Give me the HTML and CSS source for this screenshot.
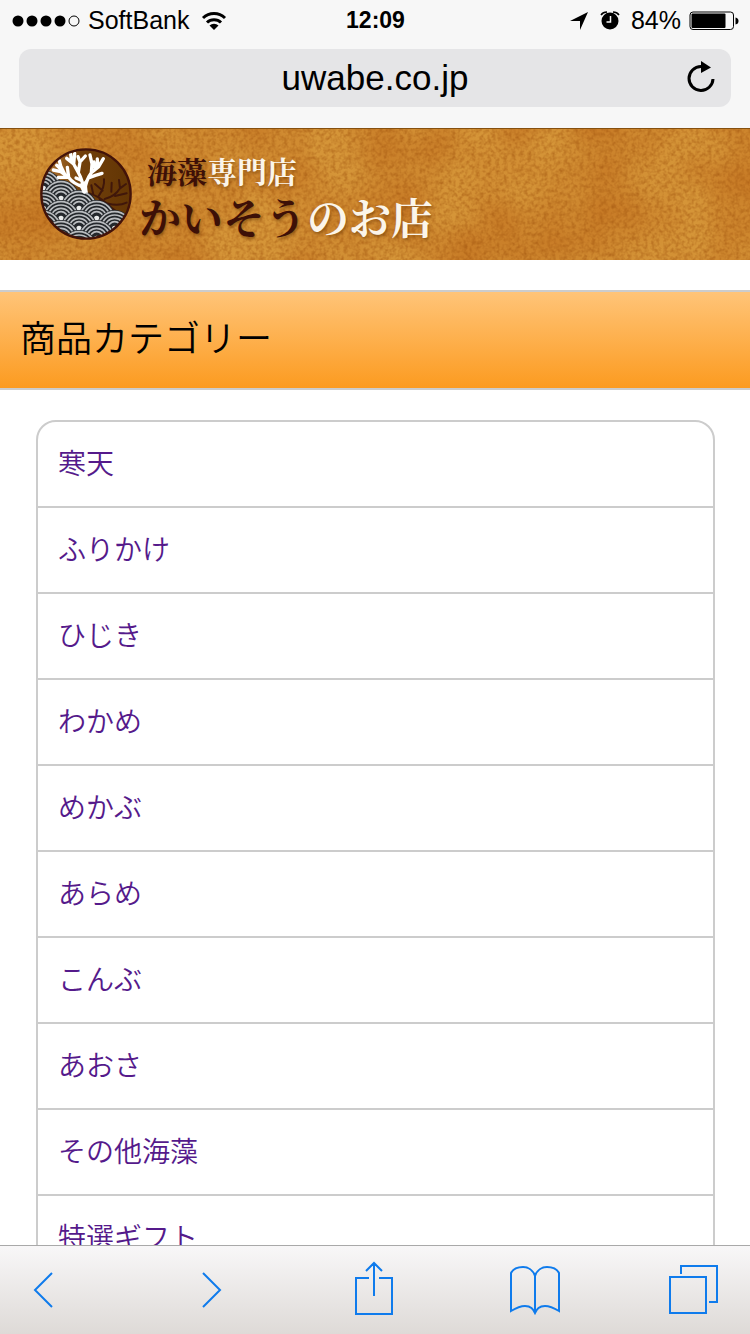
FILE: index.html
```html
<!DOCTYPE html>
<html lang="ja">

<head>
  <meta charset="utf-8">
  <meta name="viewport" content="width=device-width, initial-scale=1">
  <title>かいそうのお店</title>
  <link rel="stylesheet" href="styles.css">
</head>

<body>
  <header class="browser">
    <div class="status">
      <div class="status-left">
        <svg class="signal" width="68" height="12" viewBox="0 0 68 12">
          <circle cx="6" cy="6" r="5.5" />
          <circle cx="20" cy="6" r="5.5" />
          <circle cx="34" cy="6" r="5.5" />
          <circle cx="48" cy="6" r="5.5" />
          <circle cx="62" cy="6" r="5" fill="none" stroke="#000" />
        </svg>
        <span>SoftBank</span>
        <svg class="wifi" width="26" height="20" viewBox="0 0 26 20">
          <path d="M2 7a16 16 0 0 1 22 0M6 11.500a10 10 0 0 1 14 0" fill="none" stroke="#000" stroke-width="3" />
          <path d="M8.500 14.500a6.500 6.500 0 0 1 9 0L13 19z" />
        </svg>
      </div>
      <time class="clock">12:09</time>
      <div class="status-right">
        <svg width="20" height="20" viewBox="0 0 20 20">
          <path d="M19 1L11 19V10H1z" />
        </svg>
        <svg class="alarm" width="20" height="20" viewBox="0 0 20 20">
          <circle cx="10" cy="10" r="8.500" />
          <path d="M1 4Q3 1 7 1M13 1q4 0 6 3" fill="none" stroke="#000" stroke-width="1.500" />
          <path d="M10.500 5V11H6.500" fill="none" stroke="#f7f7f7" stroke-width="1.500" />
        </svg>
        <span>84%</span>
        <svg class="battery" width="50" height="20" viewBox="0 0 50 20">
          <rect x="1" y="1" width="43.500" height="17.500" rx="3" fill="none" stroke="#000" />
          <rect x="2.500" y="2.500" width="34" height="14.500" rx="1" />
          <path d="M46.500 6.500q3 .5 3 3.500t-3 3.500z" />
        </svg>
      </div>
    </div>
    <form class="address">
      <input class="url" type="text" value="uwabe.co.jp" aria-label="URL">
      <button class="reload" type="button" aria-label="再読み込み">
        <svg width="28" height="34" viewBox="0 0 28 34">
          <path d="M14 5.500a12 12 0 1 0 12 12.500" fill="none" stroke="#000" stroke-width="3" />
          <path d="M14 0l10 6.500L14 12z" />
        </svg>
      </button>
    </form>
  </header>

  <main class="page">
    <div class="banner">
      <svg class="texture" width="100%" height="100%">
        <filter id="grain" x="0" y="0" width="100%" height="100%" color-interpolation-filters="sRGB">
          <feTurbulence type="fractalNoise" baseFrequency="0.25" numOctaves="2" seed="4" />
          <feColorMatrix values="0 0 0 0 .64  0 0 0 0 .34  0 0 0 0 .06  1.200 0 0 0 -.45" />
        </filter>
        <filter id="blotch" x="0" y="0" width="100%" height="100%" color-interpolation-filters="sRGB">
          <feTurbulence type="fractalNoise" baseFrequency="0.014" numOctaves="2" seed="9" />
          <feColorMatrix values="0 0 0 0 .76  0 0 0 0 .44  0 0 0 0 .12  1.600 0 0 0 -.5" />
        </filter>
        <rect width="100%" height="100%" filter="url(#blotch)" />
        <rect width="100%" height="100%" filter="url(#grain)" />
      </svg>
      <a class="logo" href="#">
        <svg class="logo-mark" width="92" height="92" viewBox="30 24 276 276">
          <defs>
            <clipPath id="disc">
              <circle cx="168" cy="162" r="134" />
            </clipPath>
            <linearGradient id="sky">
              <stop offset="0" stop-color="#b87a34" />
              <stop offset=".45" stop-color="#713f0b" />
              <stop offset="1" stop-color="#623504" />
            </linearGradient>
            <g id="wave">
              <circle r="55" fill="#24282c" />
              <g fill="none" stroke="#b9bcbf" stroke-width="5">
                <circle r="50" />
                <circle r="40" />
                <circle r="30" />
                <circle r="20" />
              </g>
              <circle r="8" fill="#e8eaea" />
            </g>
          </defs>
          <circle cx="168" cy="162" r="135" fill="url(#sky)" />
          <g clip-path="url(#disc)">
            <g fill="none" stroke="#40170a" stroke-width="6" stroke-linecap="round">
              <path d="M178 160Q210 170 232 192T275 222M205 170Q225 140 222 118M218 152L195 132M224 177Q255 170 270 145L267 120M255 168L290 160M232 190Q265 200 290 188M190 164L184 136M244 155L245 128M208 174L222 210M270 145L288 132" />
            </g>
            <use href="#wave" x="40" y="145" />
            <use href="#wave" x="93" y="175" />
            <use href="#wave" x="40" y="205" />
            <use href="#wave" x="147" y="205" />
            <use href="#wave" x="93" y="235" />
            <use href="#wave" x="200" y="235" />
            <use href="#wave" x="40" y="265" />
            <use href="#wave" x="147" y="265" />
            <use href="#wave" x="254" y="265" />
            <use href="#wave" x="93" y="295" />
            <use href="#wave" x="200" y="295" />
            <use href="#wave" x="147" y="325" />
            <g fill="none" stroke="#fff" stroke-width="10" stroke-linecap="round" stroke-linejoin="round">
              <path d="M163 156Q158 120 144 96L131 72 110 55M131 72L134 40M125 67L122 42M145 97L150 66 166 48M150 66L144 50" />
              <path d="M160 140Q130 132 116 112L92 95 70 90M116 112L85 112M104 103L92 78 88 62M98 92L80 76M116 112L112 82" />
              <path d="M164 150Q168 120 184 98L186 72 180 45M184 98L206 80 220 56M196 88L192 66M203 82L202 57M175 114L196 106 216 100M152 120L138 114" />
            </g>
            <path d="M146 132Q162 130 172 114Q170 145 174 158H158Z" fill="#fff" />
          </g>
          <circle cx="168" cy="162" r="134" fill="none" stroke="#431309" stroke-width="7" />
        </svg>
        <span class="logo-text">
          <span class="logo-sub">海藻<span class="light">専門店</span></span>
          <span class="logo-name">かいそう<span class="light">のお店</span></span>
        </span>
      </a>
    </div>

    <h1 class="title">商品カテゴリー</h1>

    <ul class="categories">
      <li><a href="#">寒天</a></li>
      <li><a href="#">ふりかけ</a></li>
      <li><a href="#">ひじき</a></li>
      <li><a href="#">わかめ</a></li>
      <li><a href="#">めかぶ</a></li>
      <li><a href="#">あらめ</a></li>
      <li><a href="#">こんぶ</a></li>
      <li><a href="#">あおさ</a></li>
      <li><a href="#">その他海藻</a></li>
      <li><a href="#">特選ギフト</a></li>
    </ul>
  </main>

  <nav class="toolbar">
    <button class="tool arrow" type="button" aria-label="戻る">
      <svg width="22" height="38" viewBox="0 0 22 38">
        <path d="M20 2L3 19l17 17" />
      </svg>
    </button>
    <button class="tool arrow" type="button" aria-label="進む">
      <svg width="22" height="38" viewBox="0 0 22 38">
        <path d="M2 2l17 17L2 36" />
      </svg>
    </button>
    <button class="tool" type="button" aria-label="共有">
      <svg width="42" height="58" viewBox="0 0 42 58">
        <path d="M14 17H1v36h36V17H24M19 35V2M11 10l8-8 8 8" />
      </svg>
    </button>
    <button class="tool" type="button" aria-label="ブックマーク">
      <svg width="50" height="50" viewBox="0 0 50 50">
        <path d="M25 11C23 5 18 2 13 2 7 2 3 4 1 8v38c5-3 9-5 14-5 6 0 8 3 10 7 2-4 4-7 10-7 5 0 9 2 14 5V8c-2-4-6-6-12-6-5 0-10 3-12 9v37" />
      </svg>
    </button>
    <button class="tool" type="button" aria-label="タブ">
      <svg width="50" height="52" viewBox="0 0 50 52">
        <path d="M1 13h36v36H1zM12 10V2h36v36h-8" />
      </svg>
    </button>
  </nav>
</body>

</html>
```
FILE: styles.css
```css
* {
  box-sizing: border-box;
}

body {
  display: flex;
  flex-direction: column;
  height: 100vh;
  margin: 0;
  background-color: #fff;
  font-family: "Liberation Sans", "Noto Sans CJK JP", sans-serif;
}

button {
  padding: 0;
  border: 0;
  background: none;
}

/* browser bars */

.browser {
  flex: none;
  padding-bottom: 21px;
  background-color: #f7f7f7;
}

.status {
  display: grid;
  grid-template-columns: 1fr auto 1fr;
  align-items: center;
  height: 41px;
  margin-bottom: 8px;
  padding: 0 11px 0 12px;
  font-size: 25px;
  line-height: 41px;
}

.status-left,
.status-right {
  display: flex;
  align-items: center;
}

.status-right {
  justify-content: flex-end;
}

.signal {
  margin-right: 8px;
}

.wifi {
  margin-left: 12px;
}

.clock {
  font-size: 23px;
  font-weight: bold;
}

.alarm {
  margin: 0 11px;
}

.battery {
  margin-left: 8px;
}

.address {
  display: flex;
  height: 58px;
  margin: 0 19px;
  border-radius: 12px;
  background-color: #e5e5e7;
}

.url {
  flex: 1;
  min-width: 0;
  padding: 0 0 0 60px;
  border: 0;
  background: none;
  color: #000;
  font-family: inherit;
  font-size: 35px;
  text-align: center;
}

.reload {
  display: flex;
  align-items: center;
  justify-content: center;
  width: 60px;
}

/* page */

.page {
  flex: 1;
  min-height: 0;
  overflow: hidden;
}

.banner {
  position: relative;
  height: 132px;
  padding: 19px 40px;
  border-top: 1px solid #86500f;
  background-color: #d59538;
}

.texture {
  position: absolute;
  top: 0;
  left: 0;
}

.logo {
  position: relative;
  display: flex;
  align-items: center;
  color: #3d1007;
  font-family: "Noto Serif CJK JP", "Noto Sans CJK JP", serif;
  font-weight: bold;
  text-decoration: none;
  text-shadow: 1px 2px 3px rgba(90, 45, 0, 0.5);
}

.logo-text {
  display: flex;
  flex-direction: column;
  margin-left: 7px;
}

.logo-sub {
  padding-left: 8px;
  font-size: 30px;
  line-height: 44px;
}

.logo-name {
  font-size: 42px;
  line-height: 48px;
}

.light {
  color: #fbf5ea;
}

.title {
  margin: 30px 0;
  padding: 0 20px;
  border-top: 2px solid #ccc;
  border-bottom: 2px solid #ccc;
  background: linear-gradient(#ffc478, #fc9b20);
  font-size: 36px;
  font-weight: 350;
  line-height: 96px;
}

.categories {
  margin: 0 35px 0 36px;
  padding: 0;
  border: 2px solid #ccc;
  border-radius: 20px;
  list-style: none;
}

.categories li + li {
  border-top: 2px solid #ccc;
}

.categories a {
  display: block;
  padding: 2px 20px 0;
  color: #551a8b;
  font-size: 28px;
  font-weight: 350;
  line-height: 82px;
  text-decoration: none;
}

/* bottom toolbar */

.toolbar {
  display: flex;
  flex: none;
  align-items: center;
  justify-content: space-between;
  height: 89px;
  padding: 0 31px 0 13px;
  border-top: 1px solid #a9a9a9;
  background: linear-gradient(#f8f7f8, #dedad7);
}

.tool {
  width: 50px;
}

.arrow {
  width: 60px;
}

.tool svg {
  display: block;
  margin: 0 auto;
  fill: none;
  stroke: #0f7bec;
  stroke-width: 2;
}
```
